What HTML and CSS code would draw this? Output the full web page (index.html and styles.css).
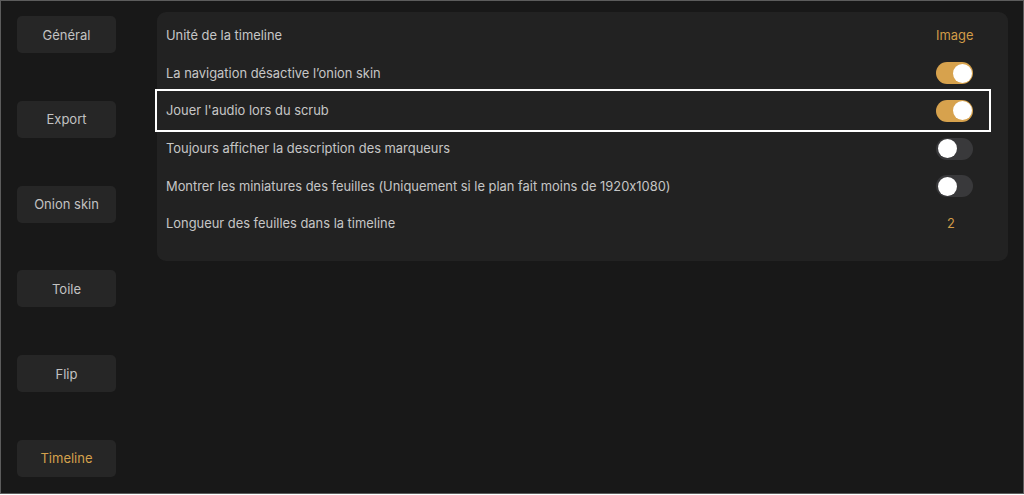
FILE: index.html
```html
<!DOCTYPE html>
<html lang="fr">
<head>
<meta charset="utf-8">
<link rel="stylesheet" href="styles.css">
</head>
<body>
<div class="frame">
  <nav class="sidebar">
    <div class="tab">Général</div>
    <div class="tab">Export</div>
    <div class="tab">Onion skin</div>
    <div class="tab">Toile</div>
    <div class="tab">Flip</div>
    <div class="tab active">Timeline</div>
  </nav>
  <main class="panel">
    <div class="row"><span class="label">Unité de la timeline</span><span class="value">Image</span></div>
    <div class="row"><span class="label">La navigation désactive l’onion skin</span><span class="toggle on"><span class="knob"></span></span></div>
    <div class="row focused"><span class="label">Jouer l'audio lors du scrub</span><span class="toggle on"><span class="knob"></span></span><span class="focus-box"></span></div>
    <div class="row"><span class="label">Toujours afficher la description des marqueurs</span><span class="toggle"><span class="knob"></span></span></div>
    <div class="row"><span class="label">Montrer les miniatures des feuilles (Uniquement si le plan fait moins de 1920x1080)</span><span class="toggle"><span class="knob"></span></span></div>
    <div class="row"><span class="label">Longueur des feuilles dans la timeline</span><span class="value num">2</span></div>
  </main>
</div>
</body>
</html>
```

FILE: styles.css
```css
html, body {
  margin: 0;
  padding: 0;
  background: #ffffff;
}
body {
  font-family: Inter, "Noto Sans", "Liberation Sans", sans-serif;
  font-feature-settings: "calt" 0;
  -webkit-font-smoothing: antialiased;
}
.frame {
  box-sizing: border-box;
  width: 1024px;
  height: 494px;
  border: 1px solid #5c5c5c;
  background: #181818;
  display: flex;
  align-items: flex-start;
}
.sidebar {
  box-sizing: border-box;
  width: 156px;
  height: 492px;
  padding: 15px 0 16px 16px;
  display: flex;
  flex-direction: column;
  justify-content: space-between;
}
.tab {
  width: 99px;
  height: 37px;
  border-radius: 5px;
  background: #262626;
  color: #c2c2c2;
  font-size: 13px;
  display: flex;
  align-items: center;
  justify-content: center;
}
.tab.active {
  color: #d4a14c;
}
.panel {
  box-sizing: border-box;
  margin-top: 11px;
  width: 851px;
  height: 249px;
  border-radius: 9px;
  background: #222222;
  padding: 5px 35px 0 9px;
}
.row {
  position: relative;
  height: 37.6px;
  display: flex;
  align-items: center;
  justify-content: space-between;
}
.label {
  color: #c6c6c6;
  font-size: 12.9px;
}
.value {
  width: 37px;
  text-align: center;
  color: #d19c48;
  font-size: 12.9px;
}
.value.num {
  box-sizing: border-box;
  padding-right: 7px;
}
.toggle {
  box-sizing: border-box;
  width: 37px;
  height: 22px;
  border-radius: 11px;
  background: #39393b;
  padding: 1.5px;
  display: flex;
  justify-content: flex-start;
}
.toggle.on {
  background: #d7a24d;
  justify-content: flex-end;
}
.knob {
  width: 19px;
  height: 19px;
  border-radius: 50%;
  background: #ffffff;
}
.focus-box {
  position: absolute;
  left: -11px;
  right: -18px;
  top: -3px;
  bottom: -2px;
  border: 2px solid #ffffff;
  pointer-events: none;
}
```
